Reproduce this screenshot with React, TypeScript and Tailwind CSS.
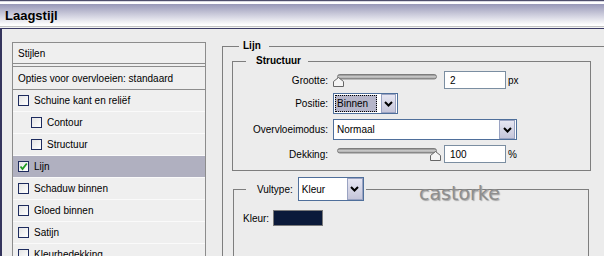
import React from "react";

const rows = [
  { label: "Schuine kant en reliëf" },
  { label: "Contour", indent: true },
  { label: "Structuur", indent: true },
  { label: "Lijn", checked: true },
  { label: "Schaduw binnen" },
  { label: "Gloed binnen" },
  { label: "Satijn" },
  { label: "Kleurhedekking" },
];

const Box = ({ checked }: { checked?: boolean }) => (
  <span className="flex h-[11px] w-[11px] shrink-0 items-center justify-center border border-[#1d2b5e] bg-gradient-to-br from-[#e4e4e4] to-white">
    {checked && (
      <svg width="9" height="9" viewBox="0 0 9 9">
        <path d="M1.5 4.5 L3.5 7 L7.8 1.5" fill="none" stroke="#1f9a22" strokeWidth="1.8" />
      </svg>
    )}
  </span>
);

const Chevron = () => (
  <svg width="9" height="6" viewBox="0 0 9 6">
    <path d="M1 1 L4.5 4.5 L8 1" fill="none" stroke="#000" strokeWidth="2" />
  </svg>
);

const Slider = ({ pos }: { pos: number }) => (
  <svg width="110" height="18" className="shrink-0">
    <defs>
      <linearGradient id="trk" x1="0" y1="0" x2="0" y2="1">
        <stop offset="0" stopColor="#7c7c7c" />
        <stop offset="0.5" stopColor="#cfcfcf" />
        <stop offset="1" stopColor="#8c8c8c" />
      </linearGradient>
    </defs>
    <rect x="4.5" y="3.5" width="99" height="4.5" rx="2.2" fill="url(#trk)" stroke="#6e6e6e" strokeWidth="0.8" />
    <path
      d={`M${pos + 5.5} 6.5 L${pos + 10.5} 10.5 L${pos + 10.5} 15.5 L${pos + 0.5} 15.5 L${pos + 0.5} 10.5 Z`}
      fill="#f5f5f5"
      stroke="#666"
    />
  </svg>
);

const DropButton = ({ className }: { className: string }) => (
  <span className={`flex items-center justify-center border border-[#9aa3c2] bg-gradient-to-b from-[#e6e6f2] to-[#c6c6da] ${className}`}>
    <Chevron />
  </span>
);

export default function App() {
  return (
    <div className="relative h-[256px] w-[604px] overflow-hidden bg-[#ececec] font-['Liberation_Sans',Arial,sans-serif] text-[10px] text-black">
      {/* title bar */}
      <div className="flex h-[29px] items-center bg-[linear-gradient(to_bottom,#4e4e6c_0,#4e4e6c_1px,#d8d8e2_1px,#d8d8e2_2px,#ffffff_2px,#ffffff_4px,#9898b8_4px,#ffffff_25px,#ffffff_26px,#c4c4c4_26px,#c4c4c4_27px,#f2f2f2_27px,#f2f2f2_28px,#3b3b66_28px,#3b3b66_29px)] pl-[5px] pt-[3px] text-[13px] font-bold">
        Laagstijl
      </div>

      <div className="flex h-[227px] border-l-2 border-[#33335c]">
        {/* styles list */}
        <div className="pl-[10px] pt-[13px]">
          <div className="w-[194px] border border-[#8c8c8c] bg-[#efefef]">
            <div className="flex h-[21px] items-center border-b border-[#8c8c8c] pl-[5px]">Stijlen</div>
            <div className="h-[3px] border-b border-[#8c8c8c]" />
            <div className="flex h-[23px] items-center border-b border-[#8c8c8c] pl-[5px]">
              Opties voor overvloeien: standaard
            </div>
            {rows.map((r) => (
              <div
                key={r.label}
                className={`flex h-[22px] items-center gap-[5px] border-b border-[#fafafa] ${r.indent ? "pl-[18px]" : "pl-[5px]"} ${r.checked ? "bg-[#b0b0c0]" : ""}`}
              >
                <Box checked={r.checked} />
                {r.label}
              </div>
            ))}
          </div>
        </div>

        {/* right side */}
        <div className="ml-[16px] pt-[10px]">
          <fieldset className="h-[260px] w-[400px] border border-[#7e7e7e]">
            <legend className="ml-[16px] pl-[4px] pr-[8px] font-bold leading-[14px]">Lijn</legend>

            <fieldset className="ml-[9px] mt-[1px] w-[359px] border border-[#7e7e7e]">
              <legend className="ml-[13px] pl-[10px] pr-[7px] font-bold leading-[14px]">Structuur</legend>
              <div className="flex flex-col pb-[7px] pt-[3px]">
                <div className="flex h-[18px] items-center gap-[5px]">
                  <span className="w-[95px] text-right">Grootte:</span>
                  <div className="flex items-center">
                    <Slider pos={0} />
                    <div className="ml-[1px] flex h-[18px] w-[62px] items-center border border-[#7b8ea1] bg-white pl-[5px]">2</div>
                    <span className="ml-[2px]">px</span>
                  </div>
                </div>
                <div className="mt-[4px] flex h-[21px] items-center gap-[5px]">
                  <span className="w-[95px] text-right">Positie:</span>
                  <div className="flex h-[21px] w-[65px] border border-[#4f6f9b] bg-white">
                    <div className="my-[1px] ml-[1px] flex w-[42px] items-center border border-dotted border-black bg-[#b5b5c9] pl-[1px]">
                      Binnen
                    </div>
                    <span className="flex-1" />
                    <DropButton className="mr-[1px] w-[15px]" />
                  </div>
                </div>
                <div className="mt-[5px] flex h-[21px] items-center gap-[5px]">
                  <span className="w-[95px] text-right">Overvloeimodus:</span>
                  <div className="flex h-[21px] w-[184px] border border-[#4f6f9b] bg-white">
                    <div className="flex flex-1 items-center pl-[3px]">Normaal</div>
                    <DropButton className="mr-[1px] w-[16px]" />
                  </div>
                </div>
                <div className="mt-[5px] flex h-[18px] items-center gap-[5px]">
                  <span className="w-[95px] text-right">Dekking:</span>
                  <div className="flex items-center">
                    <Slider pos={97} />
                    <div className="ml-[1px] flex h-[18px] w-[62px] items-center border border-[#7b8ea1] bg-white pl-[5px]">100</div>
                    <span className="ml-[2px]">%</span>
                  </div>
                </div>
              </div>
            </fieldset>

            <fieldset className="ml-[10px] mt-[6px] h-[120px] w-[356px] border border-[#7e7e7e]">
              <legend className="ml-[12px] pl-[11px] pr-[2px]">
                <div className="flex items-center">
                  <span>Vultype:</span>
                  <div className="ml-[5px] flex h-[24px] w-[66px] border border-[#4f6f9b] bg-white">
                    <div className="flex flex-1 items-center pl-[3px]">Kleur</div>
                    <DropButton className="w-[16px]" />
                  </div>
                </div>
              </legend>
              <div className="flex items-center gap-[4px] pl-[9px] pt-[9px]">
                <span>Kleur:</span>
                <span className="h-[16px] w-[50px] border border-[#7a7a7a] bg-[#0b1a3a]" />
              </div>
            </fieldset>
          </fieldset>
        </div>
      </div>

      {/* watermark */}
      <div className="absolute left-[419px] top-[184px] font-['DejaVu_Sans',sans-serif] text-[19px] leading-none text-[#8e8e8e] [text-shadow:1px_1px_1px_#a8a8a8]">
        castorke
      </div>
    </div>
  );
}
